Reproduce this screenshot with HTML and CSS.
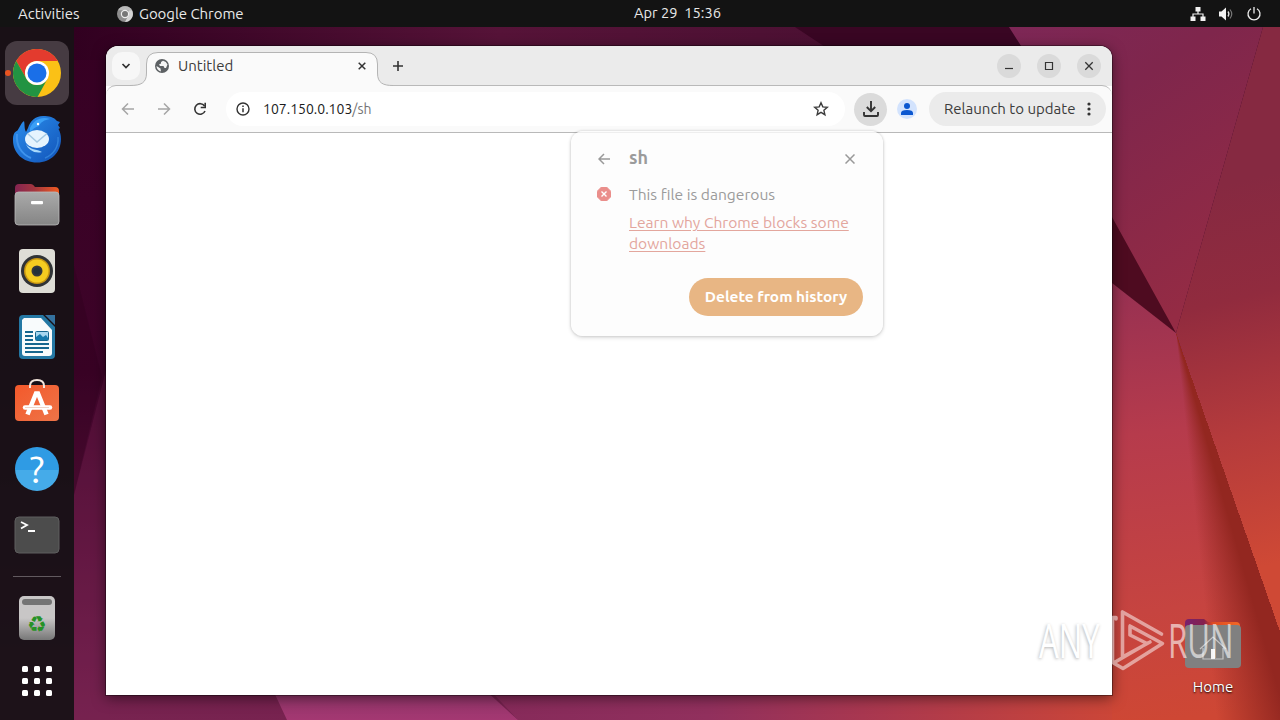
FILE: index.html
```html
<!DOCTYPE html>
<html lang="en">
<head>
  <meta charset="UTF-8">
  <meta name="viewport" content="width=device-width, initial-scale=1.0">
  <title>Desktop</title>
  <link rel="stylesheet" href="styles.css">
</head>
<body>

<svg class="wallpaper" viewBox="0 0 1280 720" aria-hidden="true">
  <defs>
    <linearGradient id="base" gradientUnits="userSpaceOnUse" x1="0" y1="27" x2="0" y2="720">
      <stop offset="0" stop-color="#360023"/><stop offset=".5" stop-color="#3e0429"/><stop offset="1" stop-color="#782350"/>
    </linearGradient>
    <linearGradient id="topband" x1="0" x2="1" y1="0" y2="0">
      <stop offset="0" stop-color="#310020"/><stop offset=".45" stop-color="#561338"/><stop offset="1" stop-color="#460f30"/>
    </linearGradient>
    <linearGradient id="violet" x1="0" x2=".55" y1="0" y2="1">
      <stop offset="0" stop-color="#7d2756"/><stop offset=".35" stop-color="#7f264c"/><stop offset="1" stop-color="#942b44"/>
    </linearGradient>
    <linearGradient id="right" gradientUnits="userSpaceOnUse" x1="1200" y1="190" x2="1290" y2="560">
      <stop offset="0" stop-color="#862941"/><stop offset=".3" stop-color="#912b3e"/><stop offset=".65" stop-color="#b53b3c"/><stop offset="1" stop-color="#cf4935"/>
    </linearGradient>
    <linearGradient id="rose" gradientUnits="userSpaceOnUse" x1="1120" y1="280" x2="1170" y2="720">
      <stop offset="0" stop-color="#963052"/><stop offset=".35" stop-color="#b63b4c"/><stop offset=".75" stop-color="#c64440"/><stop offset="1" stop-color="#ce4734"/>
    </linearGradient>
    <linearGradient id="pink" x1="0" x2="0" y1="0" y2="1">
      <stop offset="0" stop-color="#8f3468"/><stop offset="1" stop-color="#a43872"/>
    </linearGradient>
    <linearGradient id="bottom" gradientUnits="userSpaceOnUse" x1="490" x2="1112" y1="0" y2="0">
      <stop offset="0" stop-color="#862a5a"/><stop offset=".35" stop-color="#91305d"/><stop offset=".6" stop-color="#a83750"/><stop offset="1" stop-color="#cb4638"/>
    </linearGradient>
  </defs>
  <rect width="1280" height="720" fill="url(#base)"/>
  <path d="M74 27H1020V60H74z" fill="url(#topband)"/>
  <path d="M795 27H1030V60H845z" fill="#390623"/>
  <path d="M74 266L102 377 74 495z" fill="#2c001c" opacity=".3"/>
  <path d="M106 370L74 495V720H110z" fill="#752250" opacity=".3"/>
  <path d="M1112 210L1176 333L1112 290z" fill="#4e0b20"/>
  <path d="M1009 27H1263L1176 333L1112 217L1030 60z" fill="url(#violet)"/>
  <path d="M1263 27H1280V640L1176 333z" fill="url(#right)"/>
  <path d="M1112 283L1176 333L1280 632V720H1090z" fill="url(#rose)"/>
  <path d="M490 690H1112V720H518z" fill="url(#bottom)"/>
  <path d="M273 690L287 720H518L485 690z" fill="url(#pink)"/>
</svg>
<div class="fold-shade"></div>

<div class="desktop">
  <header class="topbar">
    <div class="topbar-left">
      <span class="activities">Activities</span>
      <svg width="16" height="16" viewBox="0 0 16 16"><circle cx="8" cy="8" r="8" fill="#8d8d8d"/><path d="M1 4.3A8 8 0 0 1 15 4.3H8z" fill="#b9b9b9"/><path d="M15 4.3A8 8 0 0 1 8 16L11.5 9V4.3z" fill="#d4d4d4"/><circle cx="8" cy="8" r="3.6" fill="#777" stroke="#eee" stroke-width="1.2"/></svg>
      <span class="appname">Google Chrome</span>
    </div>
    <div class="clock">Apr 29&nbsp; 15:36</div>
    <div class="tray">
      <svg width="16" height="16" viewBox="0 0 16 16"><path d="M5.5 1h5v4.500h-5zM.5 10.500h5V15h-5zM10.500 10.500h5V15h-5z" fill="#f2f2f2"/><path d="M8 5v3M3 11V8h10v3" fill="none" stroke="#f2f2f2" stroke-width="1.200"/></svg>
      <svg width="16" height="16" viewBox="0 0 16 16"><path d="M1 5.500h2.500L8 1.500v13L3.500 10.500H1z" fill="#f2f2f2"/><path d="M10 5.500q1.800 2.500 0 5" fill="none" stroke="#ddd" stroke-width="1.300"/><path d="M12 3.500q3.500 4.500 0 9" fill="none" stroke="#777" stroke-width="1.200"/></svg>
      <svg width="16" height="16" viewBox="0 0 16 16"><path d="M5 2.700a6 6 0 1 0 6 0M8 1v6.500" fill="none" stroke="#eee" stroke-width="1.300"/></svg>
    </div>
  </header>

  <div class="main">
    <nav class="dock">
      <div class="tile active">
        <i class="running"></i>
        <svg width="48" height="48" viewBox="0 0 48 48"><circle cx="24" cy="24" r="24" fill="#fbc116"/><path d="M3.200 12A24 24 0 0 1 44.800 12H24a12 12 0 0 0-10.400 18z" fill="#e33b2e"/><path d="M3.200 12A24 24 0 0 0 24.500 48L34.400 30A12 12 0 0 1 13.600 30z" fill="#229342"/><circle cx="24" cy="24" r="12" fill="#fff"/><circle cx="24" cy="24" r="9.500" fill="#1a6fe8"/></svg>
      </div>
      <div class="tile">
        <svg width="50" height="48" viewBox="0 0 50 48"><defs><linearGradient id="tb" x1="0" x2="1" y1="0" y2="1"><stop offset="0" stop-color="#2b90ee"/><stop offset="1" stop-color="#1253b8"/></linearGradient></defs><path d="M12 6C9 8 8 12 5.500 15.500 2 17 1 20 1 25 1 38 11 47.500 25 47.500S49 37 49 24c0-4-1-7.500-2.500-10L48 13l-2-3 2-3-3-1c-3-4-8-5-14-5-8 0-13 5-15 12l-2 4C12 13 13 10 12 6z" fill="url(#tb)"/><path d="M18 13C22 4 30 1 38 4c-6 1-9 3-11 7-4 1-6 3-9 6z" fill="#3ba0f6"/><path d="M5 19C4 30 9 39 19 43" fill="none" stroke="#3f93ec" stroke-width="2"/><path d="M46 22c1 10-5 18-13 21" fill="none" stroke="#2f7fd8" stroke-width="1.500"/><ellipse cx="25" cy="24" rx="12" ry="9" fill="#e5f4fe"/><path d="M15.500 18.500L25 27l10-8.500" fill="none" stroke="#a5c9e3" stroke-width="1.500"/><path d="M14 29c4 6 11 5 16 8-7 2-14-2-16-8z" fill="#a9d9fb"/><circle cx="26" cy="9" r="1.200" fill="#fff"/></svg>
      </div>
      <div class="tile">
        <svg width="46" height="42" viewBox="0 0 46 42"><defs><linearGradient id="fold" x1="0" x2="1"><stop offset="0" stop-color="#842451"/><stop offset=".45" stop-color="#a4363e"/><stop offset="1" stop-color="#f05b22"/></linearGradient><linearGradient id="grey" x1="0" x2="0" y1="0" y2="1"><stop offset="0" stop-color="#aaa"/><stop offset="1" stop-color="#858585"/></linearGradient></defs><path d="M1 4q0-4 4-4h12q2 0 4 3h20q4 0 4 4v10H1z" fill="url(#fold)"/><rect x="1" y="8" width="44" height="33" rx="3.500" fill="url(#grey)" stroke="#bbb" stroke-width=".8"/><rect x="17" y="17" width="12" height="3.200" rx="1" fill="#fff"/></svg>
      </div>
      <div class="tile">
        <svg width="38" height="46" viewBox="0 0 38 46"><rect x="1" y="1" width="36" height="44" rx="4" fill="#deddd6"/><circle cx="19" cy="23" r="16" fill="#303336"/><circle cx="19" cy="23" r="13" fill="#c69512"/><circle cx="19" cy="23" r="11.500" fill="#f5cc20"/><circle cx="19" cy="23" r="5.500" fill="#35383b"/><circle cx="19" cy="23" r="3.500" fill="#24313a"/></svg>
      </div>
      <div class="tile">
        <svg width="38" height="46" viewBox="0 0 38 46"><path d="M5 1h20l12 12v28q0 4-4 4H5q-4 0-4-4V5q0-4 4-4z" fill="#2478a4"/><path d="M6 4h17l11 12v23q0 3-3 3H7q-3 0-3-3V6z" fill="#f8fbfc"/><path d="M27 1h10v10z" fill="#34719e"/><path d="M7 18h8M7 22h8M7 26h8M7 30h24M7 34h24M7 38h18" stroke="#17678f" stroke-width="2"/><rect x="17.500" y="17.500" width="13" height="9" rx="1" fill="#a7d6ef" stroke="#17678f"/><path d="M18 26v-3l4-3 3 3 3-2 2 3v2z" fill="#1779ac"/></svg>
      </div>
      <div class="tile">
        <svg class="software" width="46" height="46" viewBox="0 0 46 46"><defs><linearGradient id="soft" x1="0" x2="1" y1="0" y2="1"><stop offset="0" stop-color="#f3592b"/><stop offset="1" stop-color="#ee7448"/></linearGradient></defs><rect x="1" y="9" width="44" height="36" rx="4" fill="url(#soft)"/><path d="M16 12v-2q0-6 7-6t7 6v2" fill="none" stroke="#f4e6dc" stroke-width="2"/><path d="M13.500 38.500L22 17.500h2l8.500 21" fill="none" stroke="#fff" stroke-width="4.500"/><path d="M11 31.500h25" stroke="#fff" stroke-width="4.500" stroke-linecap="round"/><path d="M11 31.500h24" stroke="#e5b5a1" stroke-width=".6"/></svg>
      </div>
      <div class="tile"><span class="help">?</span></div>
      <div class="tile">
        <svg width="46" height="38" viewBox="0 0 46 38"><rect x="1" y="1" width="44" height="36" rx="4" fill="#4c4c4c" stroke="#5e5e5e"/><path d="M7 6l6 3-6 3.500M14 15h7" fill="none" stroke="#fff" stroke-width="1.800"/></svg>
      </div>
      <hr>
      <div class="tile">
        <svg width="38" height="46" viewBox="0 0 38 46"><defs><linearGradient id="bin" x1="0" x2="0" y1="0" y2="1"><stop offset=".5" stop-color="#c8c6c6"/><stop offset="1" stop-color="#777"/></linearGradient></defs><rect x="1" y="1" width="36" height="44" rx="5" fill="url(#bin)"/><rect x="4" y="4" width="30" height="6" rx="3" fill="#747474"/><text class="recycle" x="19" y="37" text-anchor="middle">♻</text></svg>
      </div>
      <div class="tile apps"><i></i><i></i><i></i><i></i><i></i><i></i><i></i><i></i><i></i></div>
    </nav>

    <main class="workspace">
      <section class="window">
        <div class="tabstrip">
          <div class="tab-search"><svg width="10" height="10" viewBox="0 0 10 10"><path d="M1.500 3L5 6.500 8.500 3" fill="none" stroke="#303030" stroke-width="1.700"/></svg></div>
          <div class="tab">
            <svg class="tab-shape" width="263" height="35" viewBox="0 0 263 35"><path d="M0 33.500C11 33.500 16.500 31 16.500 21V12Q16.500 .5 28 .5H236Q247.500 .5 247.500 12V21C247.500 31 253 33.500 263 33.500V35H0z" fill="#fafafa" stroke="#b4b4b4"/><path d="M0 34.500h263" stroke="#fafafa"/></svg>
            <svg class="globe" width="14" height="14" viewBox="0 0 14 14"><circle cx="7" cy="7" r="7" fill="#5d6164"/><path d="M1.500 7L5.500 9.500 6 12.500A6 6 0 0 1 1.500 7zM8 1.700L6 3v1.500L4 5.500 5 7h3.500l1 2L11 9l1.500-3.500A6 6 0 0 0 8 1.700z" fill="#f5f5f5"/></svg>
            <span class="tab-title">Untitled</span>
            <svg class="tab-close" width="8" height="8" viewBox="0 0 8 8"><path d="M.7 .7l6.600 6.600M7.300 .7L.7 7.300" stroke="#333" stroke-width="1.500"/></svg>
          </div>
          <svg class="new-tab" width="12" height="12" viewBox="0 0 12 12"><path d="M6 1v10M1 6h10" stroke="#333" stroke-width="1.600"/></svg>
          <div class="window-buttons">
            <span><svg width="10" height="10" viewBox="0 0 10 10"><path d="M1 7.500h8" stroke="#333" stroke-width="1.200"/></svg></span>
            <span><svg width="10" height="10" viewBox="0 0 10 10"><path d="M1.500 1.500h7v7h-7z" fill="none" stroke="#333" stroke-width="1.200"/></svg></span>
            <span><svg width="10" height="10" viewBox="0 0 10 10"><path d="M1.300 1.300l7.400 7.400M8.700 1.300L1.300 8.700" stroke="#333" stroke-width="1.300"/></svg></span>
          </div>
        </div>

        <div class="toolbar">
          <div class="nav-buttons">
            <svg width="14" height="14" viewBox="0 0 14 14"><path d="M13 7H1.500M7 1.500L1.500 7 7 12.500" fill="none" stroke="#a5a5a5" stroke-width="1.500"/></svg>
            <svg width="14" height="14" viewBox="0 0 14 14"><path d="M1 7h11.500M7 1.500L12.500 7 7 12.500" fill="none" stroke="#a5a5a5" stroke-width="1.500"/></svg>
            <svg width="14" height="14" viewBox="0 0 14 14"><path d="M12 9A5.300 5.300 0 1 1 11.500 4" fill="none" stroke="#333" stroke-width="1.600"/><path d="M12.200 .8v4.700H7.700" fill="none" stroke="#333" stroke-width="1.600"/></svg>
          </div>
          <div class="omnibox">
            <svg width="14" height="14" viewBox="0 0 14 14"><circle cx="7" cy="7" r="6" fill="none" stroke="#333" stroke-width="1.400"/><path d="M7 6.200v4M7 3.500v1.500" stroke="#333" stroke-width="1.500"/></svg>
            <span class="url"><b>107.150.0.103</b>/sh</span>
            <svg class="star" width="16" height="16" viewBox="0 0 16 16"><path d="M8 1.800l1.800 4.100 4.500.4-3.400 3 1 4.400L8 11.400l-3.900 2.300 1-4.400-3.400-3 4.500-.4z" fill="none" stroke="#3c3c3c" stroke-width="1.400"/></svg>
          </div>
          <div class="download"><svg width="16" height="16" viewBox="0 0 16 16"><path d="M8 0v10M3.800 6L8 10.200 12.200 6M1 11v3q0 1 1 1h12q1 0 1-1v-3" fill="none" stroke="#333" stroke-width="1.900"/></svg></div>
          <div class="avatar"><svg width="12" height="12" viewBox="0 0 12 12"><circle cx="6" cy="3" r="3" fill="#0b57d0"/><path d="M0 12v-2q0-3 6-3t6 3v2z" fill="#0b57d0"/></svg></div>
          <div class="relaunch"><span>Relaunch to update</span><svg width="4" height="14" viewBox="0 0 4 14"><circle cx="2" cy="2" r="1.600"/><circle cx="2" cy="7" r="1.600"/><circle cx="2" cy="12" r="1.600"/></svg></div>
        </div>

        <div class="page"></div>

        <div class="bubble">
          <div class="bubble-head">
            <svg width="12" height="12" viewBox="0 0 12 12"><path d="M12 6H1M6 1L1 6l5 5" fill="none" stroke="#999" stroke-width="1.500"/></svg>
            <h2>sh</h2>
            <svg width="10" height="10" viewBox="0 0 10 10"><path d="M.5 .5l9 9M9.500 .5l-9 9" stroke="#999" stroke-width="1.500"/></svg>
          </div>
          <div class="bubble-body">
            <svg width="14" height="14" viewBox="0 0 14 14"><path d="M4.500 0h5L14 4.500v5L9.500 14h-5L0 9.500v-5z" fill="#ea8e8b" stroke="#ea8e8b" stroke-linejoin="round"/><path d="M4.500 4.500l5 5M9.500 4.500l-5 5" stroke="#fff" stroke-width="1.400"/></svg>
            <div class="bubble-text">
              <p class="warning">This file is dangerous</p>
              <p class="learn">Learn why Chrome blocks some<br>downloads</p>
            </div>
          </div>
          <button class="delete">Delete from history</button>
        </div>
      </section>

      <div class="home">
        <svg width="56" height="50" viewBox="0 0 56 50"><defs><linearGradient id="hf" x1="0" x2="1"><stop offset="0" stop-color="#77216f"/><stop offset=".35" stop-color="#86214c"/><stop offset=".5" stop-color="#dd4a24"/><stop offset="1" stop-color="#f36925"/></linearGradient></defs><path d="M0 5q0-4 4-4h15l4 3h28q4 0 4 4v12H0z" fill="url(#hf)"/><rect y="7" width="56" height="43" rx="4" fill="#808080"/><path d="M15 31l13-12 13 12M18 30v11h20V30" fill="none" stroke="#c4c4c4" stroke-width="1.200"/><path d="M26 31h4v10h-4z" fill="#f4f4f4"/></svg>
        <span>Home</span>
      </div>

      <div class="watermark">
        <span class="any">ANY</span>
        <svg width="58" height="62" viewBox="0 0 58 62"><path d="M6 10V8.500H2.500V53M51.500 25L12.500 3V48L40 33M20 17L52.500 34.500 13 59.500 3.500 54 37 34.500M20 17V26L37 34.500" fill="none" stroke="#fff" stroke-opacity=".5" stroke-width="3.600" stroke-linejoin="round" stroke-linecap="round"/></svg>
        <span class="run">RUN</span>
      </div>
    </main>
  </div>
</div>

</body>
</html>
```

FILE: styles.css
```css
* { box-sizing: border-box; }
html, body {
  margin: 0; height: 100%; overflow: hidden;
  font-family: Ubuntu, "Noto Sans", sans-serif;
  font-size: 15px; color: #3c3c3c; background: #46062f;
}
svg { display: block; flex: none; }
.wallpaper, .fold-shade { position: absolute; top: 0; left: 0; width: 1280px; height: 720px; }
.fold-shade {
  background: conic-gradient(at 1176px 333px, transparent 160.8deg, #932720 160.8deg, #932720 164deg, rgba(147, 39, 32, 0) 174deg);
}

.desktop {
  position: relative; width: 1280px; height: 720px;
  display: flex; flex-direction: column;
}
.topbar {
  height: 27px; background: #131313; color: #e9e9e9;
  display: grid; grid-template-columns: 634px auto 1fr; align-items: center;
}
.topbar-left { display: flex; align-items: center; padding-left: 18px; }
.activities { width: 99px; }
.appname { margin-left: 6px; letter-spacing: -.05px; }
.clock { white-space: pre; font-size: 14.67px; line-height: 17px; padding-bottom: 2px; }
.tray { display: flex; justify-content: flex-end; gap: 12px; padding-right: 18px; }

.main { flex: 1; display: flex; min-height: 0; }
.dock {
  width: 74px; padding-top: 14px;
  display: flex; flex-direction: column; align-items: center; gap: 2px;
  background: rgba(23, 17, 21, .93);
}
.tile {
  width: 64px; height: 64px; flex: none; border-radius: 12px;
  display: flex; align-items: center; justify-content: center; position: relative;
}
.tile.active { background: #463b42; }
.running {
  position: absolute; left: 0; top: 29px;
  width: 6px; height: 6px; border-radius: 50%; background: #e95420;
}
.software { margin-top: -8px; }
.help {
  width: 44px; height: 44px; border-radius: 50%;
  background: linear-gradient(#2f9be4 53%, #45abe9 53%);
  color: #fff; font-size: 38px; line-height: 45px; text-align: center;
}
.dock hr { width: 48px; height: 1px; margin: 7px 0; border: 0; background: #625a5f; flex: none; }
.recycle { font-family: "DejaVu Sans", sans-serif; font-size: 22px; fill: #269226; }
.apps {
  height: 62px; margin-top: -2px; display: grid;
  grid-template-columns: repeat(3, 6px); gap: 6px; align-content: center;
}
.apps i { width: 6px; height: 6px; border-radius: 1.5px; background: #fff; }

.workspace { flex: 1; position: relative; }
.window {
  position: absolute; left: 32px; top: 19px; width: 1006px; height: 649px;
  display: flex; flex-direction: column;
  border-radius: 12px 12px 0 0; background: #fff;
  box-shadow: 0 0 0 1px rgba(0, 0, 0, .35), 0 3px 14px rgba(0, 0, 0, .5);
}
.tabstrip {
  height: 40px; padding: 6px 11px 0 6px; display: flex;
  background: #ebebeb; border-radius: 12px 12px 0 0;
}
.tab-search {
  width: 28px; height: 28px; border-radius: 10px; background: #f7f7f7;
  display: flex; align-items: center; justify-content: center;
}
.tab {
  position: relative; z-index: 1; width: 231px; height: 34px; margin-left: 6px;
  padding: 0 11px 6px 9px; display: flex; align-items: center;
}
.tab-shape { position: absolute; left: -16px; top: 0; z-index: -1; }
.tab-title { margin-left: 9px; padding-bottom: 2px; flex: 1; }
.new-tab { margin: 8px 0 0 15px; }
.window-buttons { margin-left: auto; display: flex; gap: 16px; padding-top: 2px; }
.window-buttons span {
  width: 24px; height: 24px; border-radius: 50%; background: #dadada;
  display: flex; align-items: center; justify-content: center;
}

.toolbar {
  height: 48px; margin-top: -1px; padding: 0 5px 0 15px;
  display: flex; align-items: center;
  background: #fafafa; border: solid #b9b9b9; border-width: 1px 0;
  border-radius: 10px 10px 0 0;
}
.nav-buttons { display: flex; gap: 22px; }
.omnibox {
  width: 619px; height: 34px; margin-left: 19px; padding: 0 16px 0 10px;
  display: flex; align-items: center; border-radius: 17px; background: #fff;
}
.url { margin-left: 13px; flex: 1; font-size: 14px; color: #757575; }
.url b { font-weight: 400; color: #1c1c1c; }
.download {
  width: 33px; height: 33px; margin-left: 9px; border-radius: 50%; background: #dbdbdb;
  display: flex; align-items: center; justify-content: center;
}
.avatar {
  width: 20px; height: 20px; margin-left: 10px; border-radius: 50%; background: #d3e3fd;
  display: flex; align-items: center; justify-content: center;
}
.relaunch {
  width: 177px; height: 34px; margin-left: 12px; padding: 0 15px;
  display: flex; align-items: center; justify-content: space-between;
  border-radius: 17px; background: #ebebeb; white-space: nowrap;
}
.relaunch span { padding-bottom: 2px; }
.relaunch svg { fill: #333; }
.page { flex: 1; }

.bubble {
  position: absolute; left: 465px; top: 85px; width: 312px; height: 205px;
  padding: 18px 20px 20px 27px; display: flex; flex-direction: column;
  border-radius: 12px; background: rgba(253, 253, 253, .78); color: #9b9b9b;
  box-shadow: 0 0 2px 1px rgba(0, 0, 0, .09), 0 2px 4px rgba(0, 0, 0, .12);
  font-size: 15.6px;
}
.bubble-head { display: flex; align-items: center; height: 20px; padding-right: 8px; }
.bubble-head h2 { flex: 1; margin: 0 0 4px 19px; font-size: 18px; font-weight: 600; line-height: 20px; }
.bubble-body { display: flex; gap: 18px; margin: 18px 0 0 -1px; white-space: nowrap; }
.bubble-text { margin-top: -2px; }
.bubble-body p { margin: 0; }
.warning { line-height: 18px; }
.bubble-body .learn { margin-top: 9px; line-height: 21px; color: #e3a69d; text-decoration: underline; text-underline-offset: 2px; }
.delete {
  width: 174px; height: 38px; margin-top: auto; align-self: flex-end; padding: 0 0 2px;
  border: 0; border-radius: 19px; background: #e8b684; color: #fff;
  font: 600 15.4px Ubuntu, "Noto Sans", sans-serif; white-space: nowrap;
}

.home {
  position: absolute; left: 1111px; top: 591px; width: 56px;
  display: flex; flex-direction: column; align-items: center; gap: 10px;
  color: #fff; text-shadow: 0 1px 2px #000;
}
.watermark {
  position: absolute; left: 965px; top: 582px; height: 62px;
  display: flex; align-items: center; color: rgba(255, 255, 255, .6);
  font: 400 48px/62px "Open Sans", sans-serif;
}
.watermark span { width: 66px; transform-origin: 0 50%; }
.any { transform: scaleX(.65); }
.run { transform: scaleX(.65); }
.watermark .any { color: #fff; text-shadow: -1px 1px 4px rgba(0, 0, 0, .3); }
.watermark svg { margin-left: 5px; }
```
